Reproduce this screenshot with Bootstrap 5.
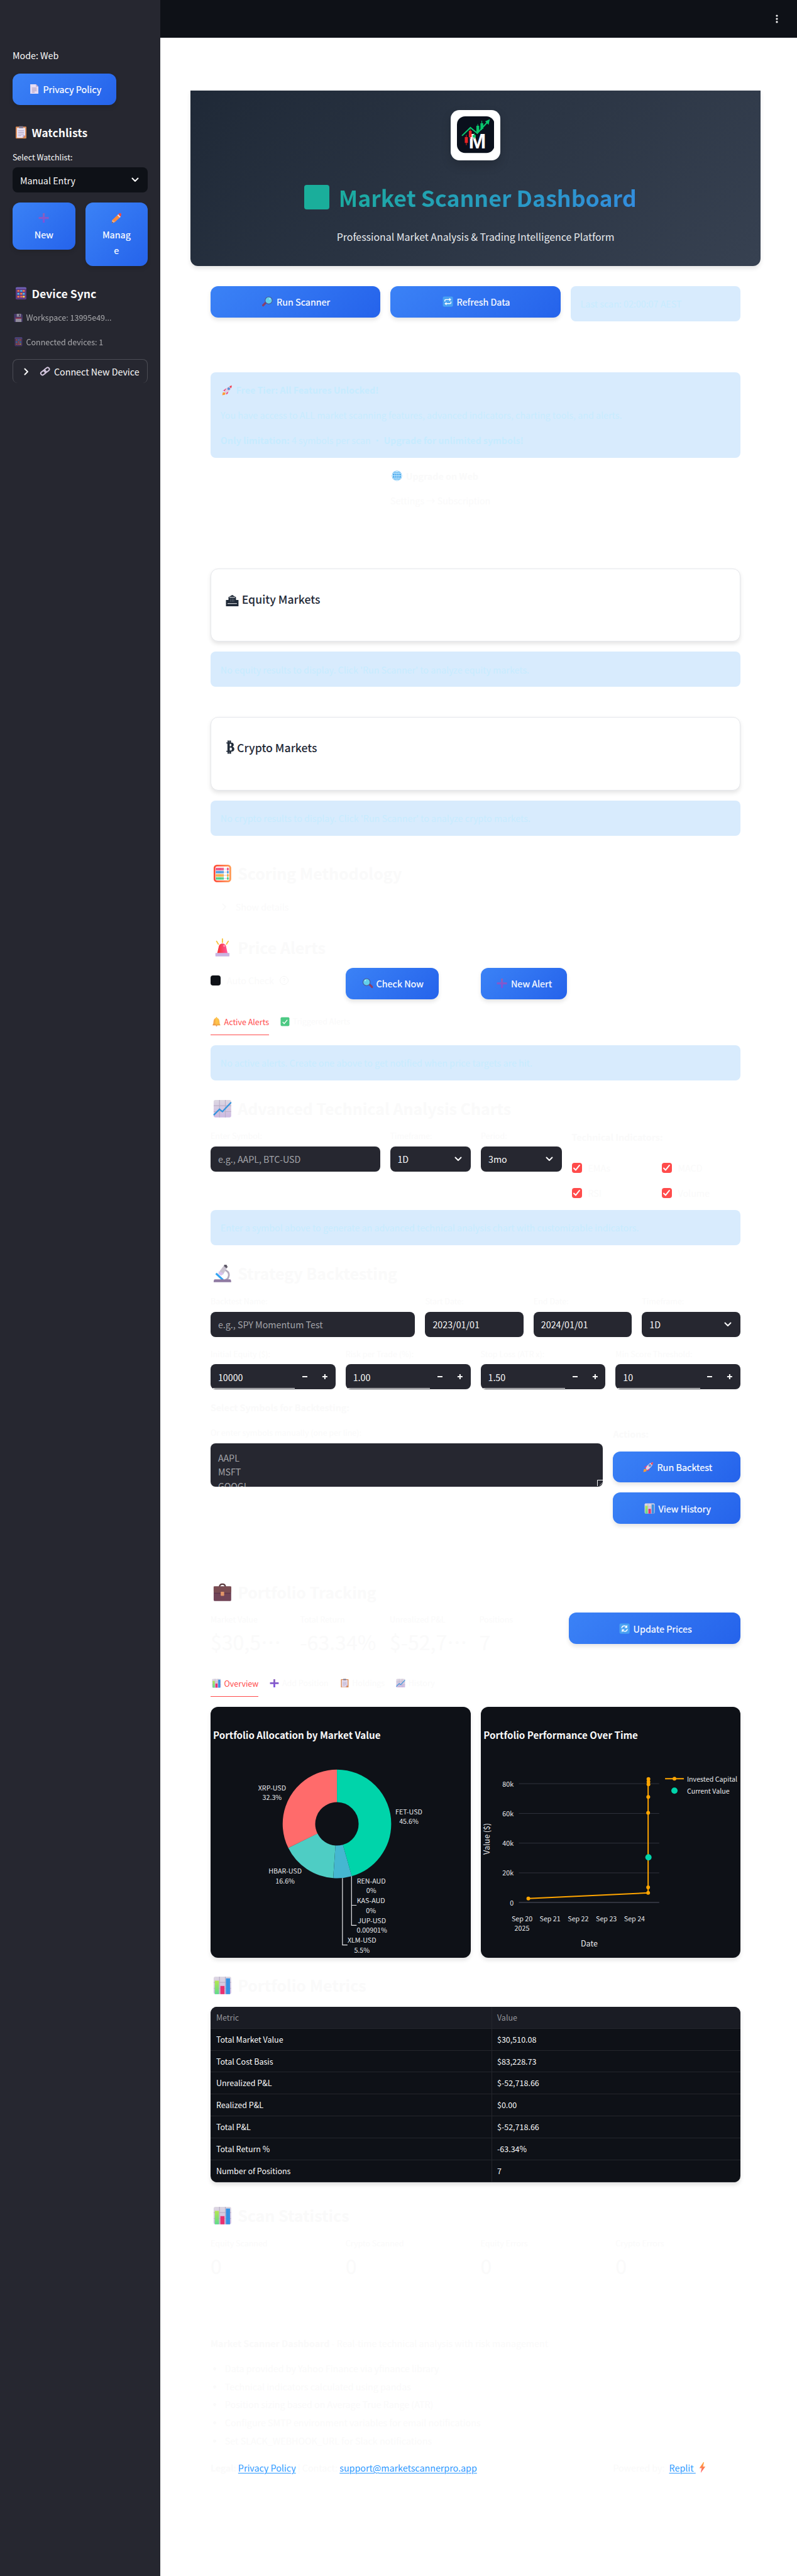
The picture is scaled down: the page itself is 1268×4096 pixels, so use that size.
<!DOCTYPE html>
<html lang="en">
<head>
<meta charset="utf-8">
<title>Market Scanner Dashboard</title>
<link href="https://cdn.jsdelivr.net/npm/bootstrap@5.3.0/dist/css/bootstrap.min.css" rel="stylesheet">
<script src="https://cdn.jsdelivr.net/npm/bootstrap@5.3.0/dist/js/bootstrap.bundle.min.js"></script>
<style>
html,body{margin:0;background:#fff;overflow:hidden}
body{font-family:"Noto Sans CJK SC","Noto Sans",sans-serif;font-size:14.33px;line-height:25.6px;color:#fafafa}
.app{zoom:.99686;width:1272px;height:4109px}
.side{width:256px;background:#262730;padding:75.5px 20px 0;flex:none}
.topbar{height:60px;background:#0e1117;padding-right:24px}
.hero{width:910px;height:280.5px;margin:84px 0 0 48px;border-radius:0 0 12px 12px;background:linear-gradient(135deg,#1f2937,#374151);box-shadow:0 4px 6px rgba(0,0,0,.1)}
.logo-box{width:80px;height:80px;margin-top:32px;border-radius:14px;background:#fff;padding:10px;box-shadow:0 8px 16px rgba(0,0,0,.15)}
.hero-title{width:846px;height:48px;margin-top:35px;padding-left:204.5px;font-size:35.8px;font-weight:700;line-height:48px;background:linear-gradient(135deg,#10b981,#3b82f6);-webkit-background-clip:text;background-clip:text;color:transparent;white-space:nowrap}
.hero-row{position:relative}
.title-block{position:absolute;left:150px;top:39px;width:39.5px;height:39.5px;border-radius:4px;background:#1aae9b}
.hero-sub{margin-top:26px;font-size:15.95px;color:#e8eaed}
.stack{width:846px;margin-left:80px}
.g16{gap:16px}
.line{display:flex;align-items:center;white-space:nowrap}
.em{display:inline-flex;justify-content:center;align-items:center;width:1.5em;margin-right:.23em;flex:none}
.em svg{width:1.19em;height:1.19em;display:block}
.btn-scan{display:flex;align-items:center;justify-content:center;border:0;border-radius:12px;background:linear-gradient(135deg,#3b82f6,#2563eb);color:#fff;font-weight:400;box-shadow:0 4px 6px rgba(0,0,0,.1);height:50px;white-space:nowrap;font-size:14.5px;line-height:25.6px;padding:0;-webkit-text-stroke:.2px #fff}
.note{background:#d8ebfd;color:#c7ebff;border-radius:8px;height:56.1px;padding:0 16px;display:flex;align-items:center;white-space:nowrap}
.panel{height:117px;border:1px solid #e5e7eb;border-radius:12px;background:#fff;box-shadow:0 4px 6px rgba(0,0,0,.1);color:#1f2937;font-size:17.7px;font-weight:500;padding:35px 0 0 23px}
.sec{height:40px;font-size:25.07px;font-weight:700;line-height:40px}
.lab{font-size:12.54px;line-height:22px;height:22px;white-space:nowrap}
.inp{height:40px;border-radius:8px;background:#262730;color:#fafafa;padding:0 12px;display:flex;align-items:center;justify-content:space-between;white-space:nowrap}
.ph{color:#a3a4a9}
.tabs{height:40px;gap:16px;font-size:12.54px}
.tabs>div{height:40px;display:flex;align-items:center;padding-bottom:4px}
.tabs .on{color:#ff4b4b;border-bottom:2px solid #ff4b4b;padding-bottom:2px}
.cbx{width:16px;height:16px;border-radius:4px;background:#ff4b4b;margin-right:10px;flex:none}
.q{width:199.5px}
.big{font-size:32.2px;line-height:50px;white-space:nowrap}
.num{position:relative}
.num:after{content:"";position:absolute;left:4px;width:131px;bottom:1px;height:1px;background:#fafafa}
.chart-card{width:415px;height:400px;border-radius:12px;background:#0e1117;box-shadow:0 4px 6px rgba(0,0,0,.1);overflow:hidden}
.chart-card svg{display:block}
.grid-tbl{width:100%;height:280.5px;border-radius:10px;overflow:hidden;background:#0e1117;box-shadow:0 4px 6px rgba(0,0,0,.12);font-size:12.54px}
.grid-tbl>div{height:35.06px;border-bottom:1px solid #24262c;line-height:34px}
.grid-tbl>div>div:first-child{width:449px;border-right:1px solid #24262c;padding-left:9px}
.grid-tbl>div>div:last-child{padding-left:8.5px}
.grid-tbl .hd{background:#1a1c24;color:#95969b}
.lk{color:#2e9aff;text-decoration:underline;text-decoration-thickness:1.3px;text-underline-offset:2px}
ul.notes{margin:0;padding-left:23px;list-style:none;line-height:28.8px}
ul.notes li:before{content:"";float:left;width:5px;height:5px;border-radius:50%;background:#fafafa;margin:12px 0 0 -19px}
.b{font-weight:700}
</style>
</head>
<body>
<svg width="0" height="0" class="position-absolute">
<defs>
<linearGradient id="lv" x1="0" y1="0" x2="0" y2="1"><stop offset="0" stop-color="#ddd8e2"/><stop offset="1" stop-color="#cdb9e2"/></linearGradient>
<linearGradient id="pu" x1="0" y1="0" x2="0" y2="1"><stop offset="0" stop-color="#8a63b8"/><stop offset="1" stop-color="#7b4fe0"/></linearGradient>
<linearGradient id="rd" x1="0" y1="0" x2="1" y2="0"><stop offset="0" stop-color="#f8312f"/><stop offset="1" stop-color="#ff5aa0"/></linearGradient>
<linearGradient id="or" x1="0" y1="0" x2="1" y2="0"><stop offset="0" stop-color="#ff4a35"/><stop offset="1" stop-color="#ff9a55"/></linearGradient>
<linearGradient id="gd" x1="0" y1="0" x2="1" y2="0"><stop offset="0" stop-color="#f0924a"/><stop offset=".5" stop-color="#ffc74a"/><stop offset="1" stop-color="#f7b34b"/></linearGradient>
<linearGradient id="lt" x1="0" y1="0" x2="0" y2="1"><stop offset="0" stop-color="#ffb13d"/><stop offset="1" stop-color="#ff4f62"/></linearGradient>
<linearGradient id="gb" x1="0" y1="0" x2="0" y2="1"><stop offset="0" stop-color="#b5e650"/><stop offset="1" stop-color="#5ddc8c"/></linearGradient>
<symbol id="page" viewBox="0 0 32 32"><path d="M4 2h17l7 7v21H4z" fill="#e6dcf4"/><path d="M21 2l7 7h-7z" fill="#b9a5cf"/><path d="M9 13h14M9 17h14M9 21h14M9 25h8" stroke="#9a86ae" stroke-width="1.5"/></symbol>
<symbol id="clip" viewBox="0 0 32 32"><rect x="3" y="2" width="26" height="29" rx="2" fill="#d98a55"/><path d="M6 5h20v18l-6 6H6z" fill="#e9e2f2"/><path d="M26 23l-6 6v-6z" fill="#b8a4d4"/><path d="M11 1h10v5H11z" fill="#857c90"/><path d="M9 12h14M9 16h14M9 20h14M9 24h8" stroke="#a695bb" stroke-width="1.4"/></symbol>
<symbol id="plus" viewBox="0 0 32 32"><path d="M14 2h4q1 0 1 1v10h11q1 0 1 1v4q0 1-1 1H19v10q0 1-1 1h-4q-1 0-1-1V19H2q-1 0-1-1v-4q0-1 1-1h11V3q0-1 1-1z" fill="url(#pu)"/></symbol>
<symbol id="pencil" viewBox="0 0 32 32"><path d="M3 22L21 5l7 7L11 28l-9 3z" fill="#ff8a3c"/><path d="M18 8l3-3 7 7-3 3z" fill="#e3dcea"/><path d="M21 5l3-3q3-2 5 1t0 6l-2 3z" fill="#f5483f"/><path d="M3 22l8 6-9 3z" fill="#e8b28f"/><path d="M3 27l3 3-4 1z" fill="#5b3a4a"/></symbol>
<symbol id="phone" viewBox="0 0 32 32"><rect x="3" y="1" width="26" height="30" rx="3" fill="#5c3a80"/><path d="M3 4q0-3 3-3h20q3 0 3 3v1H3z" fill="#6f63b8"/><path d="M7 8h5v4H7zM14 15h5v4h-5zM20 8h5v4h-5zM7 22h5v4H7z" fill="#ff7a45"/><path d="M14 8h5v4h-5zM20 15h5v4h-5zM7 15h5v4H7z" fill="#45c0f0"/><path d="M14 22h5v4h-5z" fill="#ff6a55"/><path d="M20 22h5v4h-5z" fill="#ffd84a"/></symbol>
<symbol id="floppy" viewBox="0 0 32 32"><path d="M3 2h23l4 4v22q0 2-2 2H4q-3 0-3-3V4q0-2 2-2z" fill="#5b4590"/><path d="M10 2h14v10H10z" fill="#d9d2e6"/><path d="M18 4h3v6h-3z" fill="#433b56"/><path d="M6 16h20v14H6z" fill="#d9d2e6"/><path d="M6 15h20v4H6z" fill="#d6345b"/></symbol>
<symbol id="chain" viewBox="0 0 32 32"><g fill="none" stroke="#d7cae2" stroke-width="3.6"><rect x="-8" y="-5" width="17" height="10" rx="5" transform="translate(11 20) rotate(-38)"/><rect x="-8" y="-5" width="17" height="10" rx="5" transform="translate(21 12) rotate(-38)"/></g></symbol>
<symbol id="mag" viewBox="0 0 32 32"><path d="M12 18l-9 9" stroke="#8b3e68" stroke-width="6" stroke-linecap="round"/><circle cx="19.500" cy="12.500" r="10.500" fill="#62cfea" stroke="#4a5590" stroke-width="2"/><circle cx="23" cy="8" r="2" fill="#b8f2fc"/></symbol>
<symbol id="repeat" viewBox="0 0 32 32"><rect x="1" y="1" width="30" height="30" rx="4" fill="#4aa2f2"/><path d="M7 16v-3q0-3 3-3h13M25 16v3q0 3-3 3H9" fill="none" stroke="#fff" stroke-width="2.600"/><path d="M20 5l6 5-6 5zM12 17l-6 5 6 5z" fill="#fff"/></symbol>
<symbol id="refresh" viewBox="0 0 32 32"><rect x="1" y="1" width="30" height="30" rx="4" fill="#4aa2f2"/><path d="M8 15q0-7 8-7 4 0 7 3M24 17q0 7-8 7-4 0-7-3" fill="none" stroke="#fff" stroke-width="2.600"/><path d="M24 5v9h-8zM8 27v-9h8z" fill="#fff"/></symbol>
<symbol id="rocket" viewBox="0 0 32 32"><path d="M7 15q5-6 10-3l3 6q0 6-6 11l-2-7-7-5-4 1z" fill="#f0387a"/><path d="M3 22l8 1-1 6-9 2z" fill="#ff9b36"/><path d="M8 20Q14 5 30 2q-2 16-18 23z" fill="#dccfe4"/><path d="M23 4l7-2-2 8q-4-1-5-6z" fill="#f23c4d"/><circle cx="20.500" cy="11.500" r="3.500" fill="#4597e8" stroke="#8274a8"/></symbol>
<symbol id="globe" viewBox="0 0 32 32"><circle cx="16" cy="16" r="15" fill="#48a7ee"/><g fill="none" stroke="#d4f2ff" stroke-width="1.700"><circle cx="16" cy="16" r="13.500"/><ellipse cx="16" cy="16" rx="6.500" ry="13.500"/><path d="M16 2v28M2 16h28M5 9h22M5 23h22"/></g></symbol>
<symbol id="abacus" viewBox="0 0 32 32"><rect x="2.500" y="2.500" width="27" height="27" rx="4" fill="#fff" stroke="url(#or)" stroke-width="3"/><path d="M4 8.500h24M4 13.800h24M4 19.200h24M4 24.500h24" stroke="#c9bdd6" stroke-width="1"/><g stroke-width="4.400" stroke-dasharray="2.300 .5"><path d="M5 8.500h13M24 8.500h3" stroke="#ee3d73"/><path d="M5 13.800h13M24 13.800h3" stroke="#3a8fdc"/><path d="M5 19.200h13M24 19.200h3" stroke="#f6a532"/><path d="M5 24.500h13M24 24.500h3" stroke="#37ca78"/></g></symbol>
<symbol id="siren" viewBox="0 0 32 32"><path d="M16 1v6M6 5l3 5M26 5l-3 5" stroke="#f8c33b" stroke-width="2" stroke-linecap="round"/><path d="M7 26l3-13q2-4 6-4t6 4l3 13z" fill="url(#rd)"/><circle cx="19" cy="13" r="1.600" fill="#ff9fb4"/><rect x="4" y="25" width="24" height="6" rx="1" fill="#c9b4e2"/></symbol>
<symbol id="bell" viewBox="0 0 32 32"><path d="M14 3q0-3 2-3t2 3q7 2 8 11l1 9 2 4v2H3v-2l2-4 1-9q1-9 8-11z" fill="url(#gd)"/><path d="M13 29h6q-1 3-3 3t-3-3z" fill="#d9703d"/><path d="M4 26h24" stroke="#e08a3d" stroke-width="1.500"/></symbol>
<symbol id="check" viewBox="0 0 32 32"><rect x="1" y="1" width="30" height="30" rx="4" fill="#4cc983"/><path d="M8 17l5 6L24 10" fill="none" stroke="#fff" stroke-width="3"/></symbol>
<symbol id="trend" viewBox="0 0 32 32"><rect x="1" y="1" width="30" height="30" rx="3" fill="url(#lv)"/><path d="M11 1v30M21 1v30M1 11h30M1 21h30" stroke="#bcb0c8" stroke-width="1.300"/><path d="M1 27l10-10 5 4L31 5" fill="none" stroke="#3294dd" stroke-width="2.400"/></symbol>
<symbol id="bars" viewBox="0 0 32 32"><rect x="1" y="1" width="30" height="30" rx="3" fill="url(#lv)"/><path d="M11 1v30M21 1v30M1 11h30M1 21h30" stroke="#bcb0c8" stroke-width="1.300"/><rect x="3" y="8" width="7" height="23" fill="url(#gb)"/><rect x="12.500" y="17" width="7" height="14" fill="#ea3070"/><rect x="22" y="4" width="7" height="27" fill="#3592e4"/></symbol>
<symbol id="scope" viewBox="0 0 32 32"><path d="M20 10q8 3 7 10-1 6-6 7" fill="none" stroke="#b3a9bd" stroke-width="3"/><path d="M12 11l7-9 5 4-7 12-6-3z" fill="#c9c2d0"/><path d="M10 12l8 4-4 4-5-3z" fill="#d9c2ee"/><path d="M19 1l4 0 2 4-2 2-4-3z" fill="#5f5a68"/><path d="M5 16l12 11" stroke="#32a4f2" stroke-width="3.500"/><path d="M3 26h26q2 0 2 5H1q0-5 2-5z" fill="#8f7aa2"/></symbol>
<symbol id="brief" viewBox="0 0 32 32"><path d="M11 7q0-5 5-5t5 5" fill="none" stroke="#5b3b40" stroke-width="2.400"/><rect x="1" y="6" width="30" height="25" rx="2" fill="#714457"/><path d="M1 6h30v8q0 4-5 4H6q-5 0-5-4z" fill="#7a4c52"/><path d="M2 17.500h28" stroke="#54304a" stroke-width="1.200"/><rect x="13" y="15" width="6" height="7" rx="1" fill="#e09468"/></symbol>
<symbol id="bolt" viewBox="0 0 32 32"><path d="M19 0L7 18h7l-3 14 14-19h-7l3-13z" fill="url(#lt)"/></symbol>
<symbol id="down" viewBox="0 0 16 16"><path d="M3.500 5.500L8 10l4.500-4.500" fill="none" stroke="#fafafa" stroke-width="2" stroke-linecap="round" stroke-linejoin="round"/></symbol>
<symbol id="tick" viewBox="0 0 16 16"><path d="M3 8.500l3 3 6-7.500" fill="none" stroke="#fff" stroke-width="2" stroke-linecap="round" stroke-linejoin="round"/></symbol>
</defs>
</svg>

<div class="app d-flex">
  <aside class="side">
    <div class="line">Mode: Web</div>
    <button class="btn-scan" style="width:165.4px;margin-top:16.200px"><span class="em"><svg><use href="#page"/></svg></span>Privacy Policy</button>
    <div class="line b" style="font-size:17.700px;margin-top:31px"><span class="em"><svg><use href="#clip"/></svg></span>Watchlists</div>
    <div class="lab" style="margin-top:16px">Select Watchlist:</div>
    <div class="inp" style="background:#0e1117;margin-top:5.500px">Manual Entry<svg width="16" height="16"><use href="#down"/></svg></div>
    <div class="d-flex g16 align-items-start" style="margin-top:16px">
      <button class="btn-scan flex-column" style="width:100px;height:75.200px"><span class="em m-0" style="height:25.6px"><svg><use href="#plus"/></svg></span><span>New</span></button>
      <button class="btn-scan flex-column" style="width:100px;height:100.800px"><span class="em m-0" style="height:25.6px"><svg><use href="#pencil"/></svg></span><span>Manag</span><span>e</span></button>
    </div>
    <div class="line b" style="font-size:17.700px;margin-top:31px"><span class="em"><svg><use href="#phone"/></svg></span>Device Sync</div>
    <div style="opacity:.6">
      <div class="line lab" style="margin-top:15px"><span class="em"><svg><use href="#floppy"/></svg></span>Workspace: 13995e49...</div>
      <div class="line lab" style="margin-top:17px"><span class="em"><svg><use href="#phone"/></svg></span>Connected devices: 1</div>
    </div>
    <div class="line" style="margin-top:16px;height:38.500px;border:1px solid #4c4d55;border-bottom:0;border-radius:8px;padding-left:13.500px"><svg width="16" height="16" style="transform:rotate(-90deg);margin-right:11px"><use href="#down"/></svg><span class="em"><svg><use href="#chain"/></svg></span>Connect New Device</div>
  </aside>

  <main class="flex-grow-1">
    <header class="topbar d-flex align-items-center justify-content-end"><svg width="16" height="16" fill="#fafafa"><circle cx="8" cy="3" r="1.600"/><circle cx="8" cy="8" r="1.600"/><circle cx="8" cy="13" r="1.600"/></svg></header>

    <section class="hero d-flex flex-column align-items-center">
      <div class="logo-box"><svg width="60" height="59" viewBox="0 0 60 59" class="d-block"><rect width="60" height="58.500" rx="13" fill="#0a101c"/><text x="18.500" y="51" font-family="Liberation Sans" font-weight="700" font-size="33.500" fill="#fff" textLength="29">M</text><path d="M8 31L21.500 18 32.500 27 48 10" fill="none" stroke="#08c66d" stroke-width="2"/><path d="M52.500 4.500L45 8l5.500 5.500zM31 15h4.500v10H31zM37.500 11H42v9h-4.500zM25 29.500h5v4h-5z" fill="#08c66d"/><path d="M33.200 12.500v14M39.700 7v15M27.500 27v9" stroke="#08c66d"/><path d="M12.500 33h5v9.500h-5zM19 23h4.500v10H19z" fill="#e82324"/><path d="M15 29.500v16.500M21.200 20v16" stroke="#e82324"/></svg></div>
      <div class="hero-row"><div class="title-block"></div><h1 class="hero-title mb-0">Market Scanner Dashboard</h1></div>
      <div class="hero-sub">Professional Market Analysis &amp; Trading Intelligence Platform</div>
    </section>

    <div class="stack">
      <div class="d-flex g16" style="margin-top:32px;height:56.100px">
        <button class="btn-scan" style="width:271.300px"><span class="em"><svg><use href="#mag"/></svg></span>Run Scanner</button>
        <button class="btn-scan" style="width:271.300px"><span class="em"><svg><use href="#repeat"/></svg></span>Refresh Data</button>
        <div class="note flex-grow-1">Last scan: 02:00:07 AEST</div>
      </div>

      <div class="note flex-column align-items-start justify-content-center" style="margin-top:81.400px;height:136px;gap:14.400px">
        <div class="line b"><span class="em"><svg><use href="#rocket"/></svg></span>Free Tier: All Features Unlocked!</div>
        <div>You have access to ALL market scanning features, advanced indicators, charting tools, and alerts.</div>
        <div><b>Only limitation:</b> 4 symbols per scan • <b>Upgrade for unlimited symbols!</b></div>
      </div>
      <div style="margin:16px 0 0 287px">
        <div class="line b"><span class="em"><svg><use href="#globe"/></svg></span>Upgrade on Web</div>
        <div style="margin-top:13.500px">Settings → Subscription</div>
      </div>

      <div class="panel" style="margin-top:96px"><div class="line"><svg width="21" height="18" viewBox="0 0 21 18" fill="#1f2937" style="margin:5px 5px 0 0"><path d="M4.500 3.500L10.500 0l6 3.500V8H20.500v10H.5V8h4z"/><path d="M6 3.800h9M3 13.800h15" stroke="#fff" stroke-width="1"/><path d="M8 5.500V11M10.500 5.500V11M13 5.500V11" stroke="#8a929e" stroke-width=".6"/></svg>Equity Markets</div></div>
      <div class="note" style="margin-top:16px">No equity results to display. Click 'Run Scanner' to analyze equity markets.</div>
      <div class="panel" style="margin-top:48.300px"><div class="line"><span class="b" style="font:700 20px 'DejaVu Sans';margin:-2px 4px 0 1px;transform:scaleX(.95);-webkit-text-stroke:.8px #1f2937">₿</span>Crypto Markets</div></div>
      <div class="note" style="margin-top:16px">No crypto results to display. Click 'Run Scanner' to analyze crypto markets.</div>

      <div class="line sec" style="margin-top:40.500px"><span class="em"><svg><use href="#abacus"/></svg></span>Scoring Methodology</div>
      <div class="line" style="margin-top:13px;height:40px;padding-left:14px"><svg width="16" height="16" style="transform:rotate(-90deg);margin-right:10px"><use href="#down"/></svg>Show details</div>
      <div class="line sec" style="margin-top:25px"><span class="em"><svg><use href="#siren"/></svg></span>Price Alerts</div>
      <div class="d-flex g16" style="margin-top:12.300px;height:50px">
        <div class="q line" style="height:40px"><span class="cbx" style="background:#0e1117"></span>Auto Check<svg width="16" height="16" class="ms-2" fill="none" stroke="#f5f5f5"><circle cx="8" cy="8" r="6.500"/><path d="M6 6q1-2 3-1t-1 3v1M8 10.500v1"/></svg></div>
        <div class="q"><button class="btn-scan" style="width:148.500px"><span class="em" style="transform:scaleX(-1)"><svg><use href="#mag"/></svg></span>Check Now</button></div>
        <div class="q"><button class="btn-scan" style="width:137.500px"><span class="em"><svg><use href="#plus"/></svg></span>New Alert</button></div>
      </div>
      <div class="tabs d-flex" style="margin-top:17.500px"><div class="on"><span class="em"><svg><use href="#bell"/></svg></span>Active Alerts</div><div><span class="em"><svg><use href="#check"/></svg></span>Triggered Alerts</div></div>
      <div class="note" style="margin-top:16px">No active alerts. Create one above to get notified when price targets are hit.</div>

      <div class="line sec" style="margin-top:25px"><span class="em"><svg><use href="#trend"/></svg></span>Advanced Technical Analysis Charts</div>
      <div class="d-flex g16" style="margin-top:12.500px;height:110px">
        <div style="width:270.500px"><div class="lab">Enter Symbol:</div><div class="inp ph" style="margin-top:6px">e.g., AAPL, BTC-USD</div></div>
        <div style="width:129px"><div class="lab">Timeframe:</div><div class="inp" style="margin-top:6px">1D<svg width="16" height="16"><use href="#down"/></svg></div></div>
        <div style="width:129px"><div class="lab">Period:</div><div class="inp" style="margin-top:6px">3mo<svg width="16" height="16"><use href="#down"/></svg></div></div>
        <div class="flex-grow-1"><div class="line b">Technical Indicators:</div>
          <div class="d-flex" style="margin-top:23.400px"><div class="line" style="width:143.500px"><span class="cbx"><svg width="16" height="16" class="d-block"><use href="#tick"/></svg></span>EMAs</div><div class="line"><span class="cbx"><svg width="16" height="16" class="d-block"><use href="#tick"/></svg></span>MACD</div></div>
          <div class="d-flex" style="margin-top:14.400px"><div class="line" style="width:143.500px"><span class="cbx"><svg width="16" height="16" class="d-block"><use href="#tick"/></svg></span>RSI</div><div class="line"><span class="cbx"><svg width="16" height="16" class="d-block"><use href="#tick"/></svg></span>Volume</div></div>
        </div>
      </div>
      <div class="note" style="margin-top:19.500px">Enter a symbol above to generate an advanced technical analysis chart with customizable indicators.</div>

      <div class="line sec" style="margin-top:24.500px"><span class="em"><svg><use href="#scope"/></svg></span>Strategy Backtesting</div>
      <div class="d-flex g16" style="margin-top:13.500px">
        <div style="width:326.600px"><div class="lab">Backtest Name:</div><div class="inp ph" style="margin-top:6px">e.g., SPY Momentum Test</div></div>
        <div style="width:157px"><div class="lab">Start Date:</div><div class="inp" style="margin-top:6px">2023/01/01</div></div>
        <div style="width:157px"><div class="lab">End Date:</div><div class="inp" style="margin-top:6px">2024/01/01</div></div>
        <div style="width:157px"><div class="lab">Timeframe:</div><div class="inp" style="margin-top:6px">1D<svg width="16" height="16"><use href="#down"/></svg></div></div>
      </div>
      <div class="d-flex g16" style="margin-top:16px">
        <div class="q"><div class="lab">Initial Equity ($):</div><div class="inp num" style="margin-top:6px">10000<svg width="42" height="10" stroke="#fafafa" stroke-width="2"><path d="M1 5h8M33 5h8M37 1v8"/></svg></div></div>
        <div class="q"><div class="lab">Risk per Trade (%):</div><div class="inp num" style="margin-top:6px">1.00<svg width="42" height="10" stroke="#fafafa" stroke-width="2"><path d="M1 5h8M33 5h8M37 1v8"/></svg></div></div>
        <div class="q"><div class="lab">Stop Loss (ATR x):</div><div class="inp num" style="margin-top:6px">1.50<svg width="42" height="10" stroke="#fafafa" stroke-width="2"><path d="M1 5h8M33 5h8M37 1v8"/></svg></div></div>
        <div class="q"><div class="lab">Min Score Threshold:</div><div class="inp num" style="margin-top:6px">10<svg width="42" height="10" stroke="#fafafa" stroke-width="2"><path d="M1 5h8M33 5h8M37 1v8"/></svg></div></div>
      </div>
      <div class="line b" style="margin-top:16px">Select Symbols for Backtesting:</div>
      <div class="d-flex g16" style="margin-top:16px;height:160px">
        <div style="width:626.500px"><div class="lab">Or enter symbols manually (one per line):</div>
          <div class="ph position-relative" style="margin-top:6px;height:69.300px;background:#262730;border-radius:8px;padding:12px;line-height:22.600px;overflow:hidden">AAPL<br>MSFT<br>GOOGL<svg class="position-absolute" style="right:0;bottom:1px" width="10" height="10" fill="none"><path d="M.5 10V.5H10" stroke="#fafafa"/><path d="M4 9l5-5M7 9.500l3-3" stroke="#aaa"/></svg></div></div>
        <div class="flex-grow-1"><div class="line b">Actions:</div>
          <button class="btn-scan w-100" style="margin-top:15.500px"><span class="em"><svg><use href="#rocket"/></svg></span>Run Backtest</button>
          <button class="btn-scan w-100" style="margin-top:16px"><span class="em"><svg><use href="#bars"/></svg></span>View History</button></div>
      </div>

      <div class="line sec" style="margin-top:86.200px"><span class="em"><svg><use href="#brief"/></svg></span>Portfolio Tracking</div>
      <div class="d-flex g16" style="margin-top:12.500px;height:94px">
        <div style="width:127px"><div class="lab">Market Value</div><div class="big">$30,5…</div></div>
        <div style="width:127px"><div class="lab">Total Return</div><div class="big">-63.34%</div></div>
        <div style="width:127px"><div class="lab">Unrealized P&amp;L</div><div class="big">$-52,7…</div></div>
        <div style="width:127px"><div class="lab">Positions</div><div class="big">7</div></div>
        <button class="btn-scan flex-grow-1"><span class="em"><svg><use href="#refresh"/></svg></span>Update Prices</button>
      </div>
      <div class="tabs d-flex"><div class="on"><span class="em"><svg><use href="#bars"/></svg></span>Overview</div><div><span class="em"><svg><use href="#plus"/></svg></span>Add Position</div><div><span class="em"><svg><use href="#clip"/></svg></span>Holdings</div><div><span class="em"><svg><use href="#trend"/></svg></span>History</div></div>

      <div class="d-flex g16" style="margin-top:16px">
        <div class="chart-card"><svg width="415" height="400" fill="#e8e9ec" font-size="10.75" text-anchor="middle">
          <text x="4" y="51" text-anchor="start" font-size="15.200" font-weight="700" fill="#fafafa">Portfolio Allocation by Market Value</text>
          <g transform="translate(201.700 186.700)" fill="none" stroke-width="52">
            <circle r="60.600" stroke="#00d4aa" pathLength="100" stroke-dasharray="45.600 54.400" transform="rotate(-90)"/>
            <circle r="60.600" stroke="#45b7d1" pathLength="100" stroke-dasharray="5.500 94.500" transform="rotate(74.160)"/>
            <circle r="60.600" stroke="#4ecdc4" pathLength="100" stroke-dasharray="16.600 83.400" transform="rotate(93.960)"/>
            <circle r="60.600" stroke="#ff6b6b" pathLength="100" stroke-dasharray="32.300 67.700" transform="rotate(153.720)"/>
          </g>
          <path d="M225 270v78.500h8M225 316.500h8M210.500 273v106.800h8" fill="none" stroke="#e8e9ec" stroke-width="1.200"/>
          <text x="98.200" y="133.300">XRP-USD</text><text x="98.200" y="148.700">32.3%</text>
          <text x="316.500" y="171.300">FET-USD</text><text x="316.500" y="187">45.6%</text>
          <text x="119" y="266">HBAR-USD</text><text x="119" y="282">16.6%</text>
          <text x="256.500" y="281.500">REN-AUD</text><text x="256.500" y="297">0%</text>
          <text x="256" y="313">KAS-AUD</text><text x="256" y="329">0%</text>
          <text x="257.500" y="345">JUP-USD</text><text x="257.500" y="360.500">0.00901%</text>
          <text x="241.500" y="376.500">XLM-USD</text><text x="241.500" y="391.800">5.5%</text>
        </svg></div>
        <div class="chart-card"><svg width="415" height="400" fill="#e8e9ec" font-size="10.75" text-anchor="middle">
          <text x="4.300" y="51" text-anchor="start" font-size="15.200" font-weight="700" fill="#fafafa">Portfolio Performance Over Time</text>
          <path d="M60.700 122.500h224M60.700 170h224M60.700 217.400h224M60.700 264.800h224" stroke="#30333d"/><path d="M60.700 312h224" stroke="#30333d" stroke-width="2.200"/>
          <g text-anchor="end"><text x="52.300" y="127">80k</text><text x="52.300" y="174.500">60k</text><text x="52.300" y="221.800">40k</text><text x="52.300" y="269">20k</text><text x="52.300" y="316.500">0</text></g>
          <text x="65.700" y="342">Sep 20</text><text x="65.700" y="357.300">2025</text><text x="110.500" y="342">Sep 21</text><text x="155.400" y="342">Sep 22</text><text x="200.300" y="342">Sep 23</text><text x="245.200" y="342">Sep 24</text>
          <text x="173" y="382.500" font-size="12.540">Date</text><text transform="translate(14.500 210.500) rotate(-90)" font-size="12.540">Value ($)</text>
          <path d="M75.800 305.700L267 296.700V115.500M294 114.500h30" fill="none" stroke="#ffa500" stroke-width="2"/>
          <g fill="#ffa500"><circle cx="75.800" cy="305.700" r="3"/><circle cx="267" cy="296.700" r="3"/><circle cx="267" cy="288" r="3"/><circle cx="267" cy="169" r="3"/><circle cx="267.200" cy="143.600" r="3"/><circle cx="267.500" cy="123.700" r="3"/><circle cx="267.500" cy="119.500" r="3"/><circle cx="267.500" cy="115" r="3"/><circle cx="309" cy="114.500" r="3"/></g>
          <g fill="#00d4aa"><circle cx="267.500" cy="240" r="5"/><circle cx="309" cy="133.700" r="5"/></g>
          <g text-anchor="start"><text x="329" y="119.500">Invested Capital</text><text x="329" y="138.500">Current Value</text></g>
        </svg></div>
      </div>

      <div class="line sec" style="margin-top:24.500px"><span class="em"><svg><use href="#bars"/></svg></span>Portfolio Metrics</div>
      <div class="grid-tbl" style="margin-top:13.800px">
        <div class="hd d-flex"><div>Metric</div><div>Value</div></div>
        <div class="d-flex"><div>Total Market Value</div><div>$30,510.08</div></div>
        <div class="d-flex"><div>Total Cost Basis</div><div>$83,228.73</div></div>
        <div class="d-flex"><div>Unrealized P&amp;L</div><div>$-52,718.66</div></div>
        <div class="d-flex"><div>Realized P&amp;L</div><div>$0.00</div></div>
        <div class="d-flex"><div>Total P&amp;L</div><div>$-52,718.66</div></div>
        <div class="d-flex"><div>Total Return %</div><div>-63.34%</div></div>
        <div class="d-flex"><div>Number of Positions</div><div>7</div></div>
      </div>
      <div class="line sec" style="margin-top:33px"><span class="em"><svg><use href="#bars"/></svg></span>Scan Statistics</div>
      <div class="d-flex g16" style="margin-top:13px;height:74px">
        <div class="q"><div class="lab">Equity Scanned</div><div class="big">0</div></div>
        <div class="q"><div class="lab">Crypto Scanned</div><div class="big">0</div></div>
        <div class="q"><div class="lab">Equity Errors</div><div class="big">0</div></div>
        <div class="q"><div class="lab">Crypto Errors</div><div class="big">0</div></div>
      </div>
      <div style="margin-top:83.500px"><b>Market Scanner Dashboard</b> - Real-time technical analysis with risk management</div>
      <ul class="notes" style="margin-top:13.500px">
        <li>Data provided by Yahoo Finance via yfinance library</li>
        <li>Technical indicators calculated using pandas</li>
        <li>Position sizing based on Average True Range (ATR)</li>
        <li>Configure SMTP environment variables for email notifications</li>
        <li>Set SLACK_WEBHOOK_URL for Slack notifications</li>
      </ul>
      <div class="d-flex" style="margin-top:15.300px">
        <div style="width:642.500px"><b style="letter-spacing:-.2px">Legal:</b> <a class="lk" href="#">Privacy Policy</a> | <span>Contact:</span> <a class="lk" href="#">support@marketscannerpro.app</a></div>
        <div><span>Powered by:</span> <a class="lk ms-1" href="#">Replit&nbsp;<svg width="17" height="17" style="margin:-4px 2px 0"><use href="#bolt"/></svg></a></div>
      </div>
    </div>
  </main>
</div>
</body>
</html>
